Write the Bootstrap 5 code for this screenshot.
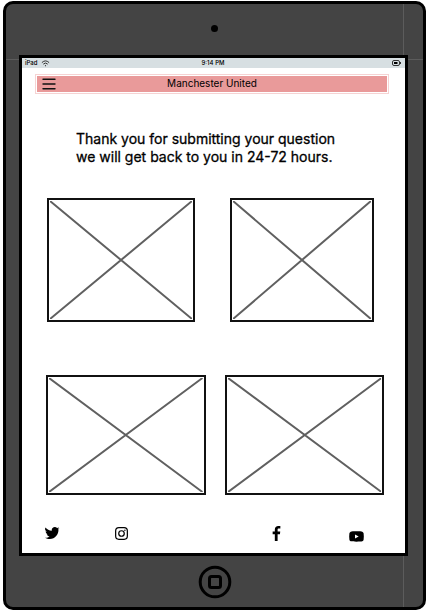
<!DOCTYPE html>
<html lang="en">
<head>
<meta charset="utf-8">
<meta name="viewport" content="width=device-width, initial-scale=1">
<title>Manchester United</title>
<link rel="stylesheet" href="https://cdn.jsdelivr.net/npm/bootstrap@5.3.0/dist/css/bootstrap.min.css">
<style>
body { font-family: Inter, "Liberation Sans", sans-serif; color: #000; background: #fff; padding: 1px 1px 3px 3px; }
.tablet {
  border: 3px solid #000; border-radius: 10px; padding: 0 15px 0 13px;
  background:
    linear-gradient(#5c5c5c, #5c5c5c) right 19px top / 1px 100% no-repeat,
    linear-gradient(#5c5c5c, #5c5c5c) left 55px / 100% 1px no-repeat,
    #444;
}
.tablet-top { height: 51px; padding: 21px 0 0 2px; }
.camera { width: 7px; height: 7px; background: #000; }
.screen { border: 3px solid #000; }
.status { height: 10px; background: #d7dfe2; font-size: 6px; font-weight: 500; line-height: 10px; padding: 0 4px 0 3px; }
.title-bar { margin: 6px 16px 0 13px; border: 1px solid #f6d3d3; padding: 1px; }
.title-fill { background: #e99a9a; height: 16px; display: grid; grid-template-columns: 1fr auto 1fr; align-items: center; }
.title-text { font-size: 10px; line-height: 14px; margin: 0; padding-bottom: 2px; font-weight: 400; }
.menu-btn { background: none; border: 0; padding: 0 0 0 5px; }
.message { font-size: 14px; line-height: 18px; margin: 36px 20px 0 54px; -webkit-text-stroke: .3px #000; }
.frames-a { padding: 32px 31px 0 25px; gap: 35px; }
.frames-b { padding: 53px 21px 0 24px; gap: 19px; }
.frame { flex: 1 1 0; min-width: 0; border: 2px solid #111; padding: 1px; }
.frame-wide { flex-grow: 1.03; }
.frames-a .frame { height: 124px; }
.frames-b .frame { height: 120px; }
.socials { display: grid; grid-template-columns: 70fr 156fr 77fr 56fr; padding: 29px 0 11px 23px; height: 58px; align-items: center; }
.socials a { color: #000; }
.tablet-bottom { height: 51px; padding-left: 2px; }
</style>
<script src="https://cdn.jsdelivr.net/npm/bootstrap@5.3.0/dist/js/bootstrap.bundle.min.js"></script>
</head>
<body>
<div class="tablet">
  <div class="tablet-top d-flex justify-content-center"><div class="camera rounded-circle"></div></div>
  <div class="screen bg-white">
    <div class="status d-flex justify-content-between align-items-center">
      <div class="d-flex align-items-center gap-1 col-4"><span>iPad</span>
        <svg width="9" height="7" viewBox="0 0 8 7" fill="none" stroke="#333" stroke-width="1" aria-hidden="true"><path d="M.4 2.6Q4-.8 7.6 2.6M1.8 4.1Q4 2 6.2 4.1"/><circle cx="4" cy="5.7" r=".6" fill="#333" stroke="none"/></svg>
      </div>
      <span>9:14 PM</span>
      <div class="col-4 d-flex justify-content-end">
        <svg width="9" height="6" viewBox="0 0 9 6" aria-hidden="true"><rect x=".5" y=".5" width="7" height="5" rx="1.5" fill="none" stroke="#333"/><path d="M2 2h3.5v2H2z" fill="#000"/><path d="M8 2h1v2H8z" fill="#333"/></svg>
      </div>
    </div>
    <header class="title-bar"><div class="title-fill">
      <button class="menu-btn d-flex" type="button" aria-label="Menu"><svg width="14" height="12" viewBox="0 0 14 12" stroke="#111" stroke-width="1.4" stroke-linecap="round"><path d="M1 1.2h12M1 6h12M1 10.8h12"/></svg></button>
      <h1 class="title-text">Manchester United</h1>
    </div></header>
    <main>
      <p class="message">Thank you for submitting your question<br>we will get back to you in 24-72 hours.</p>
      <div class="frames-a d-flex">
        <div class="frame frame-wide"><svg class="d-block w-100 h-100" viewBox="0 0 100 100" preserveAspectRatio="none" stroke="#606060" stroke-width="2"><path vector-effect="non-scaling-stroke" d="M0 0l100 100M100 0L0 100"/></svg></div>
        <div class="frame"><svg class="d-block w-100 h-100" viewBox="0 0 100 100" preserveAspectRatio="none" stroke="#606060" stroke-width="2"><path vector-effect="non-scaling-stroke" d="M0 0l100 100M100 0L0 100"/></svg></div>
      </div>
      <div class="frames-b d-flex">
        <div class="frame"><svg class="d-block w-100 h-100" viewBox="0 0 100 100" preserveAspectRatio="none" stroke="#606060" stroke-width="2"><path vector-effect="non-scaling-stroke" d="M0 0l100 100M100 0L0 100"/></svg></div>
        <div class="frame"><svg class="d-block w-100 h-100" viewBox="0 0 100 100" preserveAspectRatio="none" stroke="#606060" stroke-width="2"><path vector-effect="non-scaling-stroke" d="M0 0l100 100M100 0L0 100"/></svg></div>
      </div>
    </main>
    <footer class="socials">
      <a class="d-flex" href="#" aria-label="Twitter"><svg width="15" height="14" viewBox="0 0 512 480" fill="currentColor"><path d="M459.4 136c.3 4.500.3 9.100.3 13.600 0 138.700-105.600 298.600-298.600 298.600-59.500 0-114.700-17.200-161.100-47.100 8.400 1 16.600 1.300 25.300 1.300 49 0 94.200-16.600 130.300-44.800-46.100-1-84.800-31.200-98.100-72.800 6.500 1 13 1.600 19.800 1.600 9.400 0 18.800-1.300 27.600-3.600-48.100-9.700-84.100-52-84.100-103v-1.300c14 7.800 30.200 12.700 47.400 13.300C20 173.800 1.600 142 1.600 105.800c0-19.500 5.200-37.400 14.300-53 51.700 63.700 129.300 105.300 216.400 109.800-1.600-7.800-2.600-15.900-2.600-24C229.700 80.800 276.500 33.700 334.600 33.700c30.200 0 57.500 12.700 76.700 33.100 23.700-4.500 46.500-13.300 66.600-25.300-7.800 24.400-24.400 44.800-46.100 57.800 21.100-2.300 41.600-8.100 60.400-16.200-14.300 20.800-32.200 39.300-52.600 54.300z"/></svg></a>
      <a class="d-flex" href="#" aria-label="Instagram"><svg width="13" height="13" viewBox="0 0 16 16" fill="none" stroke="currentColor" stroke-width="1.500"><rect x=".8" y=".8" width="14.400" height="14.400" rx="4"/><circle cx="8" cy="8" r="3.400"/><circle cx="12.200" cy="3.900" r=".9" fill="currentColor" stroke="none"/></svg></a>
      <a class="d-flex" href="#" aria-label="Facebook"><svg width="9" height="15" viewBox="0 0 264 448" fill="currentColor"><path d="M225 3v72h-42c-33 0-40 16-40 40v51h79l-10 81h-69v201H60V247H-5v-81H60v-59C60 39 102 0 163 0c29 0 54 2 62 3z" transform="translate(22)"/></svg></a>
      <a class="d-flex align-self-end" href="#" aria-label="YouTube"><svg width="15" height="11" viewBox="0 0 15 11"><path fill="currentColor" d="M7.500.3c3 0 5 .1 5.800.4.7.3 1.200.9 1.300 1.600.3 2 .3 4.400 0 6.400-.1.700-.6 1.300-1.300 1.600-1.600.5-10 .5-11.600 0C1 10 .5 9.400.4 8.700.1 6.700.1 4.300.4 2.300.5 1.600 1 1 1.700.7 2.500.4 4.500.3 7.500.3z"/><path fill="#fff" d="M6 3.400v4.200l3.700-2.100z"/></svg></a>
    </footer>
  </div>
  <div class="tablet-bottom d-flex justify-content-center align-items-center">
    <svg width="34" height="34" viewBox="0 0 34 34" fill="none" stroke="#000" stroke-width="3"><circle cx="17" cy="17" r="14.800"/><rect x="11.500" y="11.500" width="11" height="11" rx="2"/></svg>
  </div>
</div>
</body>
</html>
